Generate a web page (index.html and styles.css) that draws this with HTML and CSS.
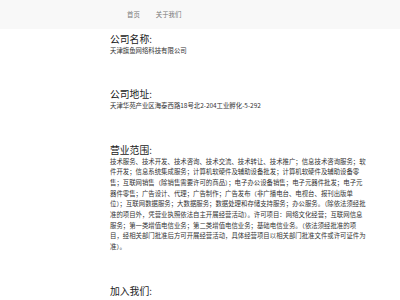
FILE: index.html
```html
<!DOCTYPE html>
<html lang="zh-CN">
<head>
    <meta charset="UTF-8">
    <meta name="viewport" content="width=device-width, initial-scale=1.0">
    <title>天津旗鱼网络科技有限公司</title>
    <link rel="stylesheet" href="styles.css">
</head>
<body>
    <!-- 导航 -->
    <header class="navbar">
        <nav class="nav">
            <a href="#">首页</a>
            <a href="#">关于我们</a>
        </nav>
    </header>

    <!-- 公司信息 -->
    <main class="content">
        <section class="info">
            <h3>公司名称:</h3>
            <p>天津旗鱼网络科技有限公司</p>
        </section>

        <section class="info">
            <h3>公司地址:</h3>
            <p>天津华苑产业区海泰西路18号北2-204工业孵化-5-292</p>
        </section>

        <section class="info">
            <h3>营业范围:</h3>
            <p>技术服务、技术开发、技术咨询、技术交流、技术转让、技术推广；信息技术咨询服务；软件开发；信息系统集成服务；计算机软硬件及辅助设备批发；计算机软硬件及辅助设备零售；互联网销售（除销售需要许可的商品）；电子办公设备销售；电子元器件批发；电子元器件零售；广告设计、代理；广告制作；广告发布（非广播电台、电视台、报刊出版单位）；互联网数据服务；大数据服务；数据处理和存储支持服务；办公服务。（除依法须经批准的项目外，凭营业执照依法自主开展经营活动）。许可项目：网络文化经营；互联网信息服务；第一类增值电信业务；第二类增值电信业务；基础电信业务。（依法须经批准的项目，经相关部门批准后方可开展经营活动，具体经营项目以相关部门批准文件或许可证件为准）。</p>
        </section>

        <section class="info">
            <h3>加入我们:</h3>
        </section>
    </main>
</body>
</html>
```

FILE: styles.css
```css
body {
    margin: 0;
    font-family: "Noto Sans CJK SC", "Noto Sans", sans-serif;
    background-color: white;
    color: #333;
}

.navbar {
    background-color: #f8f8f8;
    height: 29px;
    display: flex;
    align-items: center;
}

.nav {
    display: flex;
    margin-left: 119px;
}

.nav a {
    color: #777;
    text-decoration: none;
    font-size: 6.4px;
    padding: 0 8px;
}

.content {
    margin-left: 110px;
    width: 258px;
    padding-top: 5px;
}

.info {
    margin-bottom: 33px;
}

.info h3 {
    font-size: 9.8px;
    font-weight: normal;
    line-height: 1.1;
    margin: 0 0 1px;
    color: #222;
}

.info p {
    font-size: 6.4px;
    line-height: 10.67px;
    margin: 0;
}
```
